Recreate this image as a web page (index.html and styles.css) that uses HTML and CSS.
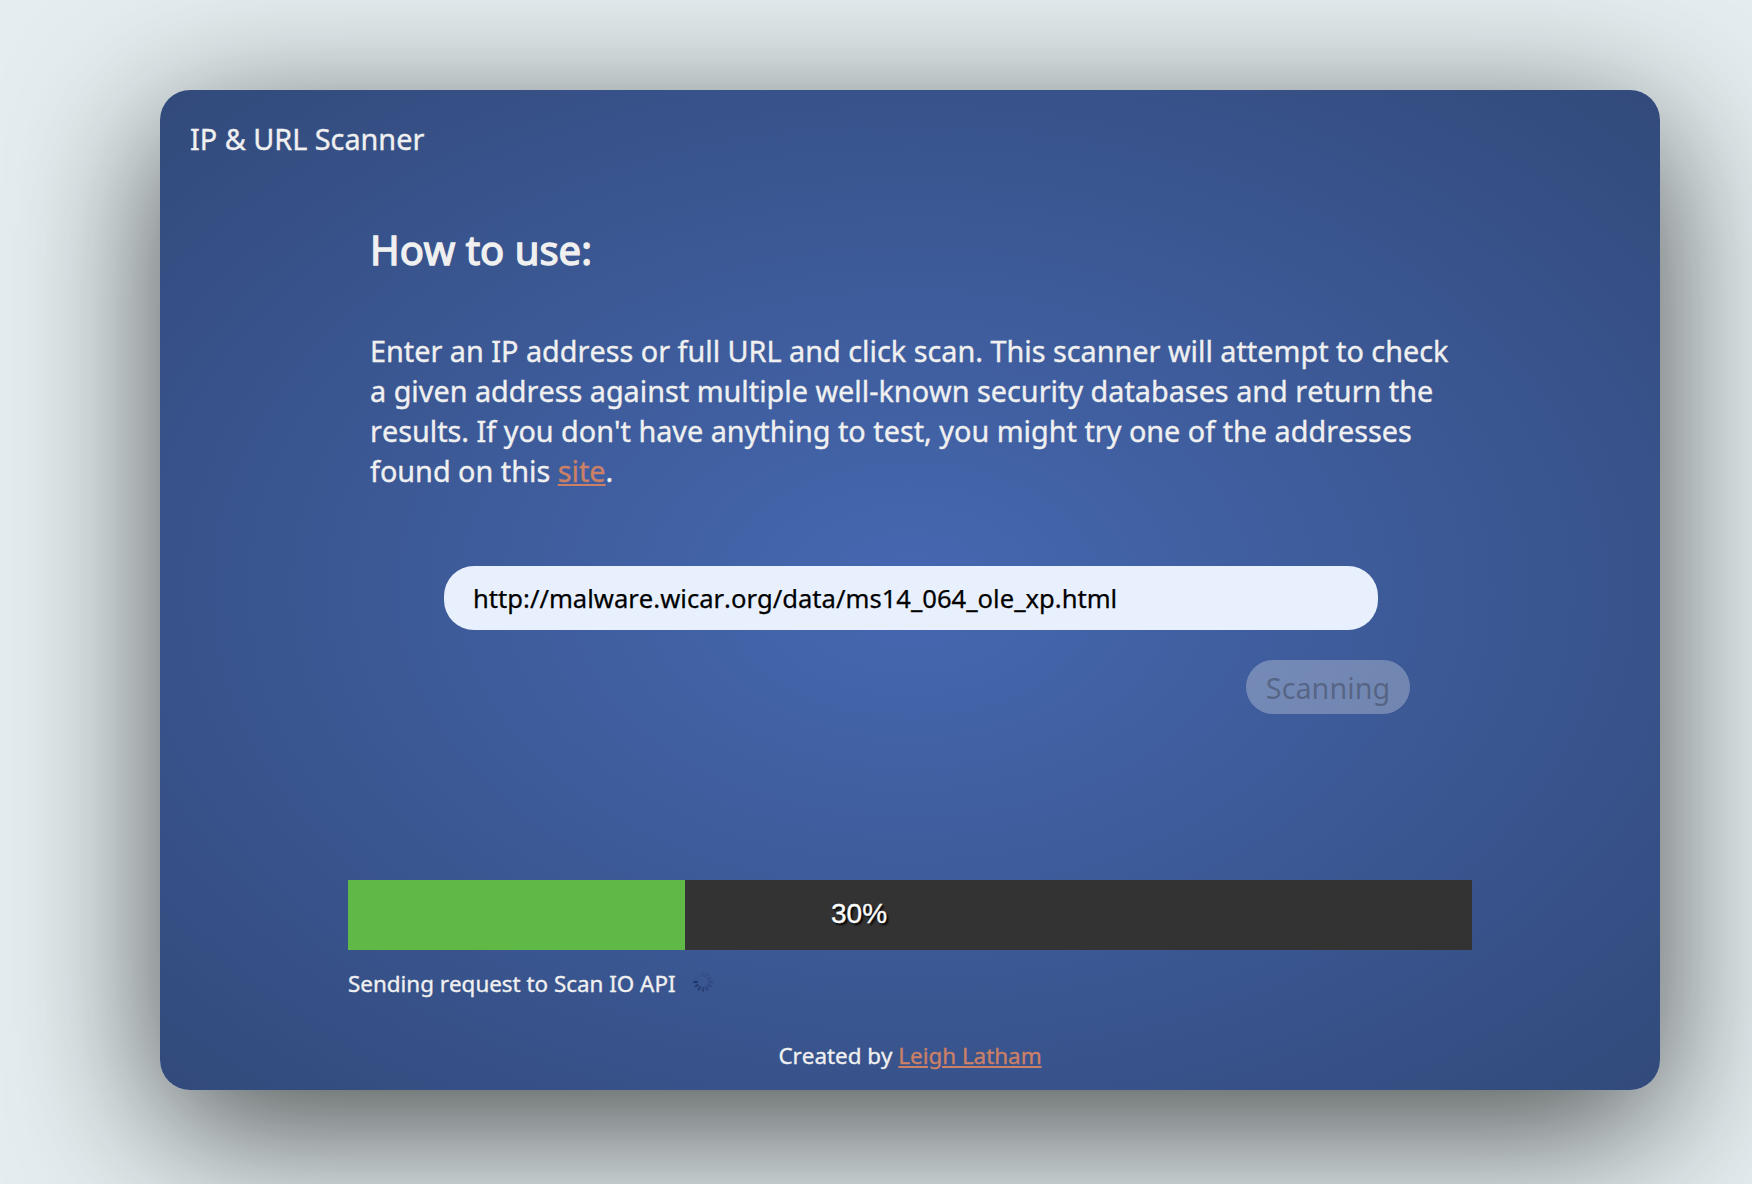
FILE: index.html
```html
<!DOCTYPE html>
<html lang="en">
<head>
<meta charset="utf-8">
<title>IP &amp; URL Scanner</title>
<link rel="stylesheet" href="styles.css">
</head>
<body>
<main class="card">
  <header class="title">IP &amp; URL Scanner</header>
  <section class="intro">
    <h1 class="heading">How to use:</h1>
    <p class="text">Enter an IP address or full URL and click scan. This scanner will attempt to check<br>a given address against multiple well-known security databases and return the<br>results. If you don't have anything to test, you might try one of the addresses<br>found on this <a class="link" href="#">site</a>.</p>
  </section>
  <form class="form">
    <input class="address" type="text" value="http://malware.wicar.org/data/ms14_064_ole_xp.html">
    <button class="scan" type="button" disabled>Scanning</button>
  </form>
  <section class="progress">
    <div class="bar"><div class="fill" style="width:30%"></div><span class="percent">30%</span></div>
    <div class="status">
      <span>Sending request to Scan IO API</span>
      <svg class="spinner" viewBox="-10 -10 20 20" stroke="#1b2d5c" stroke-width="2.2">
        <path d="M-5.2 0H-9.7" opacity=".75"/>
        <path d="M-5.2 0H-9.7" transform="rotate(-30)" opacity=".65"/>
        <path d="M-5.2 0H-9.7" transform="rotate(-60)" opacity=".58"/>
        <path d="M-5.2 0H-9.7" transform="rotate(-90)" opacity=".5"/>
        <path d="M-5.2 0H-9.7" transform="rotate(-120)" opacity=".42"/>
        <path d="M-5.2 0H-9.7" transform="rotate(-150)" opacity=".35"/>
        <path d="M-5.2 0H-9.7" transform="rotate(180)" opacity=".3"/>
        <path d="M-5.2 0H-9.7" transform="rotate(150)" opacity=".25"/>
        <path d="M-5.2 0H-9.7" transform="rotate(120)" opacity=".2"/>
        <path d="M-5.2 0H-9.7" transform="rotate(90)" opacity=".14"/>
        <path d="M-5.2 0H-9.7" transform="rotate(60)" opacity=".08"/>
        <path d="M-5.2 0H-9.7" transform="rotate(30)" opacity=".04"/>
      </svg>
    </div>
  </section>
  <footer class="footer">Created by <a class="link" href="#">Leigh Latham</a></footer>
</main>
</body>
</html>
```
FILE: styles.css
```css
* { box-sizing: border-box; }
body {
  margin: 0;
  height: 1184px;
  padding: 90px 0 0 160px;
  overflow: hidden;
  background: #e4edef;
  font-family: "Noto Sans", sans-serif;
  font-kerning: none;
  color: #f0f0f0;
}
.card {
  display: flex;
  flex-direction: column;
  width: 1500px;
  height: 1000px;
  border-radius: 30px;
  background: radial-gradient(#4668b1, #324a7b);
  box-shadow: 0 38px 150px rgba(0, 0, 0, .68);
  -webkit-text-stroke: .35px;
}
.title { padding: 29px 30px 0; font-size: 28.8px; line-height: 40px; }
.intro { padding: 0 210px; margin-top: 63px; }
.heading {
  margin: 0;
  font-size: 40px;
  line-height: 56px;
  font-weight: 400;
  -webkit-text-stroke: 1.4px #f0f0f0;
}
.text { margin: 53px 0 0; font-size: 28.8px; line-height: 40px; white-space: nowrap; }
.link { color: #cc8066; text-decoration: underline; }
.form {
  display: flex;
  flex-direction: column;
  padding: 0 250px 0 284px;
  margin-top: 75px;
}
.address {
  width: 934px;
  height: 64px;
  padding: 0 29px;
  border: 0;
  border-radius: 30px;
  background: #e8f0fe;
  color: #000;
  font: 25.6px "Noto Sans", sans-serif;
  font-kerning: none;
  -webkit-text-stroke: .25px;
}
.scan {
  align-self: flex-end;
  width: 164px;
  height: 54px;
  margin-top: 30px;
  padding: 0;
  border: 0;
  border-radius: 27px;
  background: rgba(239, 239, 239, .3);
  color: rgba(16, 16, 16, .3);
  font: 28.8px "Noto Sans", sans-serif;
  -webkit-text-stroke: 0;
}
.progress { margin: 166px 188px 0; }
.bar { display: flex; position: relative; height: 70px; background: #333; }
.fill { background: #60b947; }
.percent {
  position: absolute;
  left: 483px;
  top: 17px;
  color: #fff;
  font: 28px/34px "Liberation Sans", Arial, sans-serif;
  text-shadow: 2px 2px 2px #000;
}
.status { display: flex; align-items: center; margin-top: 16px; height: 34px; font-size: 22.4px; }
.spinner { width: 20px; height: 20px; margin: 0 0 2px 17px; }
.footer { margin-top: 39px; text-align: center; font-size: 22.4px; line-height: 34px; }
```
